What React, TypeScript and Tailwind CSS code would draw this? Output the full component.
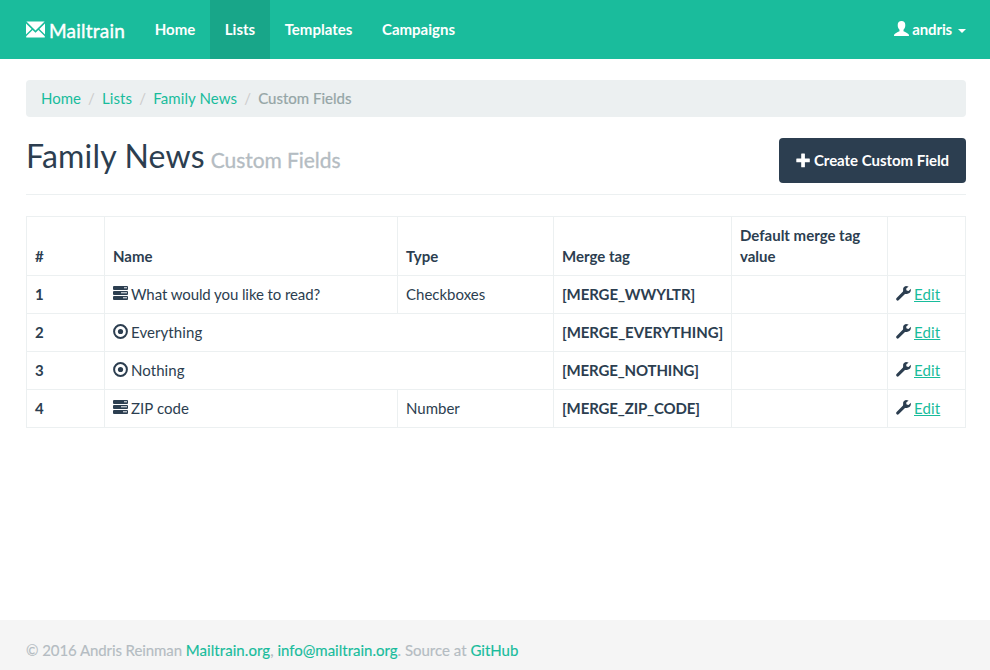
import React from "react";

type Field = { id: number; name: string; type?: string; tag: string; icon: "tasks" | "record"; nameTracking: string; tagTracking: string };

const fields: Field[] = [
  { id: 1, name: "What would you like to read?", type: "Checkboxes", tag: "[MERGE_WWYLTR]", icon: "tasks", nameTracking: "tracking-[-0.09px]", tagTracking: "tracking-[-0.1px]" },
  { id: 2, name: "Everything", tag: "[MERGE_EVERYTHING]", icon: "record", nameTracking: "tracking-[0.08px]", tagTracking: "tracking-[-0.06px]" },
  { id: 3, name: "Nothing", tag: "[MERGE_NOTHING]", icon: "record", nameTracking: "tracking-[0.06px]", tagTracking: "tracking-[-0.14px]" },
  { id: 4, name: "ZIP code", type: "Number", tag: "[MERGE_ZIP_CODE]", icon: "tasks", nameTracking: "tracking-[0.06px]", tagTracking: "tracking-[-0.12px]" },
];

function Envelope() {
  return (
    <svg className="h-[17px] w-[19px] shrink-0" viewBox="0 0 19 17" fill="#fff">
      <path d="M0.4 0.4H18.6L9.5 9.4Z" />
      <path d="M0 2.4L5.6 8L0 13.4ZM19 2.4L13.4 8L19 13.4Z" />
      <path d="M6.6 9L9.5 11.8L12.4 9L18.8 15.2V16.6H0.2V15.2Z" />
    </svg>
  );
}

function User() {
  return (
    <svg className="h-[15px] w-[15px] shrink-0" viewBox="0 0 15 15" fill="#fff">
      <path d="M7.5 0C9.9 0 11.3 1.6 11.3 4C11.3 6 10.7 7.6 9.5 8.7V10.3C11 11.1 13.2 12 14.3 12.9C14.8 13.3 15 13.8 15 15H0C0 13.8 0.2 13.3 0.7 12.9C1.8 12 4 11.1 5.5 10.3V8.7C4.3 7.6 3.7 6 3.7 4C3.7 1.6 5.1 0 7.5 0Z" />
    </svg>
  );
}

function Plus() {
  return (
    <svg className="h-[15px] w-[15px] shrink-0" viewBox="0 0 15 15" fill="#fff">
      <path d="M5.2 1.1Q5.2.6 5.7.6H8.4Q8.9.6 8.9 1.1V5.5H13.3Q13.8 5.5 13.8 6V8.8Q13.8 9.3 13.3 9.3H8.9V13.7Q8.9 14.2 8.4 14.2H5.7Q5.2 14.2 5.2 13.7V9.3H.8Q.3 9.3.3 8.8V6Q.3 5.5.8 5.5H5.2Z" />
    </svg>
  );
}

function Tasks() {
  return (
    <svg className="h-[15px] w-[15px] shrink-0" viewBox="0 0 15 15">
      <g fill="#2c3e50">
        <rect x="0" y="0" width="15" height="4" rx="1" />
        <rect x="0" y="5" width="15" height="4" rx="1" />
        <rect x="0" y="10" width="15" height="4" rx="1" />
      </g>
      <g fill="#b9c0c7">
        <rect x="11" y="1" width="3" height="1.4" />
        <rect x="8" y="6" width="6" height="1.4" />
        <rect x="10" y="11" width="4" height="1.4" />
      </g>
    </svg>
  );
}

function Record() {
  return (
    <svg className="h-[15px] w-[15px] shrink-0" viewBox="0 0 15 15">
      <circle cx="7.5" cy="7.5" r="6.4" fill="none" stroke="#2c3e50" strokeWidth="2" />
      <circle cx="7.5" cy="7.5" r="2.6" fill="#2c3e50" />
    </svg>
  );
}

function Wrench() {
  return (
    <svg className="h-[15px] w-[15px] shrink-0" viewBox="0 0 15 15" fill="#2c3e50">
      <path d="M12.6.6L10 .1C8.2.3 6.9 1.9 7.1 3.8C7.1 4.4 7.2 5 7 5.6L.6 12.1C0 12.7 0 13.5.5 14.1C1.1 14.8 2 14.8 2.6 14.2L9 8C9.6 7.8 10.2 7.9 10.9 7.9C12.8 7.9 14.5 6.6 14.8 4.8L14.9 2.8L12.5 4.9L10.6 4.4L10.1 2.7Z" />
    </svg>
  );
}

const cell = "border border-[#ecf0f1] px-2 py-0";

export default function App() {
  return (
    <div className="flex h-[670px] w-[990px] flex-col bg-white font-['Lato',sans-serif] text-[15px] leading-[21px] text-[#2c3e50]">
      <nav className="flex h-[59px] shrink-0 items-center justify-between bg-[#1abc9c] pr-6 pl-[26px] font-bold text-white">
        <div className="flex h-full items-center">
          <a className="mr-[15px] flex h-full w-[99px] items-center gap-1 text-[19px] font-normal">
            <Envelope />
            <span className="pt-[2px] tracking-[0.22px] whitespace-nowrap [-webkit-text-stroke:0.4px_#fff]">Mailtrain</span>
          </a>
          <a className="flex h-full w-[70px] items-center justify-center">Home</a>
          <a className="flex h-full w-[60px] items-center justify-center bg-[#18a689]">Lists</a>
          <a className="flex h-full w-[97px] items-center justify-center">Templates</a>
          <a className="flex h-full w-[103px] items-center justify-center">Campaigns</a>
        </div>
        <a className="flex items-center">
          <span className="-mt-[2px]"><User /></span>
          <span className="ml-[3px] tracking-[-0.15px]">andris</span>
          <span className="mt-[3px] ml-[6px] border-x-4 border-t-4 border-x-transparent border-t-white" />
        </a>
      </nav>

      <main className="flex-1 pt-[21px] pr-6 pl-[26px]">
        <ol className="flex h-[37px] items-center rounded bg-[#ecf0f1] px-[15px] text-[#18bc9c]">
          <li>Home</li>
          <li className="w-[21px] text-center text-[#ccc]">/</li>
          <li className="tracking-[0.1px]">Lists</li>
          <li className="w-[21px] text-center text-[#ccc]">/</li>
          <li className="tracking-[0.11px]">Family News</li>
          <li className="w-[21px] text-center text-[#ccc]">/</li>
          <li className="text-[#95a5a6] [-webkit-text-stroke:0.2px_#95a5a6]">Custom Fields</li>
        </ol>

        <header className="mt-[21px] flex h-[57px] items-start justify-between border-b border-[#ecf0f1]">
          <h2 className="flex items-baseline text-[32px] leading-[35px] tracking-[0.18px]">
            Family News
            <small className="ml-[6px] text-[21px] tracking-[-0.05px] text-[#b4bcc2] [-webkit-text-stroke:0.3px_#b4bcc2]">Custom Fields</small>
          </h2>
          <button className="flex h-[45px] w-[187px] items-center justify-center gap-[3px] rounded bg-[#2c3e50] font-bold tracking-[-0.03px] whitespace-nowrap text-white">
            <Plus />
            <span>Create Custom Field</span>
          </button>
        </header>

        <table className="mt-[21px] w-[940px] table-fixed border-collapse text-left">
          <colgroup>
            <col className="w-[78px]" />
            <col className="w-[293px]" />
            <col className="w-[156px]" />
            <col className="w-[178px]" />
            <col className="w-[156px]" />
            <col className="w-[78px]" />
          </colgroup>
          <thead>
            <tr className="h-[59px]">
              <th className={`${cell} pb-2 align-bottom`}>#</th>
              <th className={`${cell} pb-2 align-bottom`}>Name</th>
              <th className={`${cell} pb-2 align-bottom`}>Type</th>
              <th className={`${cell} pb-2 align-bottom`}>Merge tag</th>
              <th className={`${cell} pb-2 align-bottom`}>Default merge tag value</th>
              <th className={cell} />
            </tr>
          </thead>
          <tbody>
            {fields.map((f) => (
              <tr key={f.id} className="h-[38px]">
                <th className={cell}>{f.id}</th>
                <td className={cell} colSpan={f.type ? 1 : 2}>
                  <div className="flex items-center gap-[3px]">
                    <span className="-mt-[2px]">{f.icon === "tasks" ? <Tasks /> : <Record />}</span>
                    <span className={f.nameTracking}>{f.name}</span>
                  </div>
                </td>
                {f.type && <td className={cell}>{f.type}</td>}
                <td className={`${cell} font-bold whitespace-nowrap ${f.tagTracking}`}>{f.tag}</td>
                <td className={cell} />
                <td className={cell}>
                  <div className="flex items-center gap-[3px]">
                    <span className="-mt-[2px]"><Wrench /></span>
                    <a className="tracking-[0.15px] text-[#18bc9c] underline">Edit</a>
                  </div>
                </td>
              </tr>
            ))}
          </tbody>
        </table>
      </main>

      <footer className="h-[50px] shrink-0 bg-[#f5f5f5] pt-5 pl-[26px] text-[#b4bcc2] [-webkit-text-stroke:0.15px_currentColor]">
        <span className="tracking-[-0.08px]">© 2016 Andris Reinman </span>
        <a className="tracking-[0.06px] text-[#18bc9c]">Mailtrain.org</a>,{" "}
        <a className="text-[#18bc9c]">info@mailtrain.org</a>. Source at <a className="text-[#18bc9c]">GitHub</a>
      </footer>
    </div>
  );
}
